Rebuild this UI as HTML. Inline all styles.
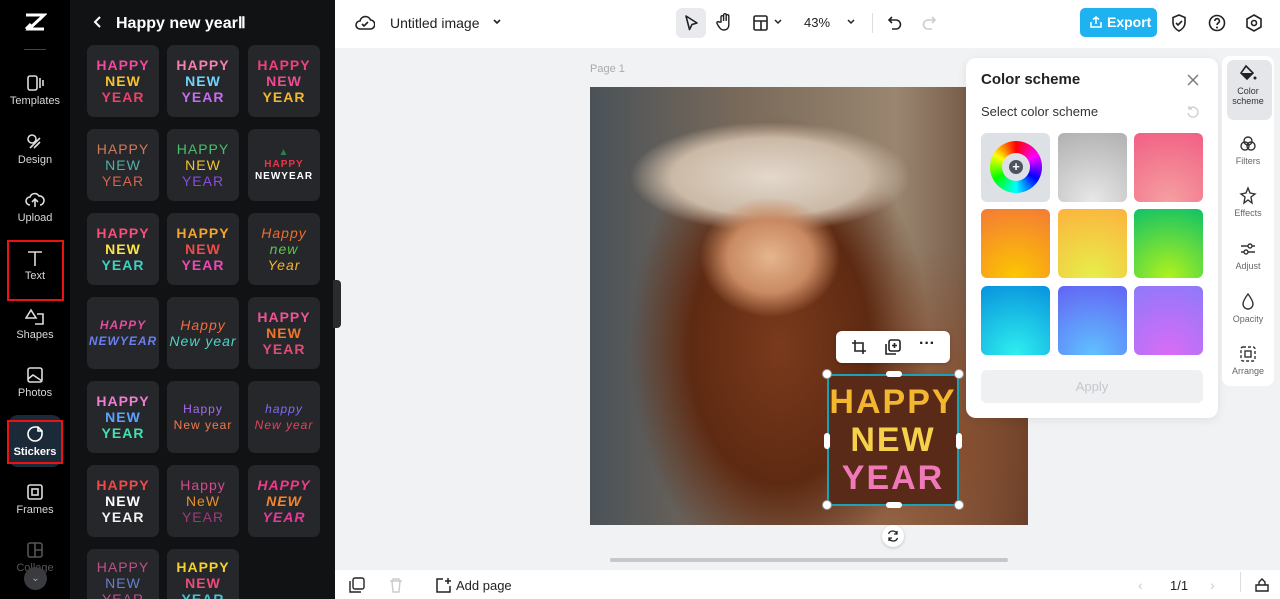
<!DOCTYPE html>
<html style="width:1280px;height:599px;overflow:hidden"><head><meta charset="utf-8"><style>
*{box-sizing:border-box;margin:0;padding:0}
body{width:1280px;height:599px;overflow:hidden;font-family:"Liberation Sans",sans-serif;background:#f1f2f4;position:relative}
.nav{position:absolute;left:0;top:0;width:70px;height:599px;background:#000;overflow:hidden}
.nav .it{position:absolute;left:0;width:70px;text-align:center;color:#d8d8d8;font-size:11px}
.nav svg{display:block;margin:0 auto 3px}
.panel{position:absolute;left:70px;top:0;width:265px;height:599px;background:#111214;overflow:hidden}
.panel h1{position:absolute;left:94px;top:13px;color:#fff;font-size:16px;font-weight:bold}
.tile{position:absolute;width:72px;height:72px;border-radius:7px;background:#26272b;display:flex;flex-direction:column;align-items:center;justify-content:center;font-weight:bold;font-size:14px;line-height:16px;letter-spacing:1px;overflow:hidden}
.top{position:absolute;left:335px;top:0;width:945px;height:48px;background:#fff}
.ic{position:absolute}
.sw{position:absolute;width:69px;height:69px;border-radius:6px}
.side{position:absolute;left:1222px;top:56px;width:52px;height:330px;background:#fff;border-radius:8px}
.side .s{position:absolute;left:0;width:52px;text-align:center;font-size:9px;color:#666}
</style></head><body>

<div class="nav">
 <svg class="ic" style="left:23px;top:11px" width="24" height="22" viewBox="0 0 24 22"><path d="M3 4h18L6 18h15M3 18l5-5M21 4l-5 5" stroke="#fff" stroke-width="3" fill="none"/></svg>
 <div style="position:absolute;left:24px;top:49px;width:22px;height:1px;background:#444"></div>
 <div class="it" style="top:74px"><svg width="20" height="18" viewBox="0 0 20 18"><rect x="3" y="2" width="9" height="14" rx="2" stroke="#ddd" stroke-width="1.6" fill="none"/><path d="M15 4v10M18 6v6" stroke="#ddd" stroke-width="1.6"/></svg>Templates</div>
 <div class="it" style="top:133px"><svg width="20" height="18" viewBox="0 0 20 18"><circle cx="7" cy="6" r="4" stroke="#ddd" stroke-width="1.6" fill="none"/><path d="M5 15l10-10M9 15l6-6" stroke="#ddd" stroke-width="1.6"/></svg>Design</div>
 <div class="it" style="top:191px"><svg width="20" height="18" viewBox="0 0 20 18"><path d="M5 14a4 4 0 010-8 5 5 0 019-1 4 4 0 011 9M10 16V8M7 11l3-3 3 3" stroke="#ddd" stroke-width="1.6" fill="none"/></svg>Upload</div>
 <div class="it" style="top:249px;font-size:11px"><svg width="20" height="18" viewBox="0 0 20 18"><path d="M3 3h14M10 3v14" stroke="#ddd" stroke-width="1.6"/></svg>Text</div>
 <div style="position:absolute;left:7px;top:240px;width:57px;height:61px;border:2px solid #e11"></div>
 <div class="it" style="top:308px"><svg width="20" height="18" viewBox="0 0 20 18"><path d="M6 2l5 8H1zM12 6h6v10h-8" stroke="#ddd" stroke-width="1.6" fill="none"/></svg>Shapes</div>
 <div class="it" style="top:366px"><svg width="20" height="18" viewBox="0 0 20 18"><rect x="3" y="2" width="14" height="14" rx="2" stroke="#ddd" stroke-width="1.6" fill="none"/><path d="M3 13l5-4 9 6" stroke="#ddd" stroke-width="1.6" fill="none"/></svg>Photos</div>
 <div style="position:absolute;left:8px;top:415px;width:54px;height:52px;border-radius:10px;background:#1b2a38"></div>
 <div class="it" style="top:425px;color:#fff;font-weight:bold"><svg width="20" height="18" viewBox="0 0 20 18"><path d="M17 9a7 7 0 11-7-7h3l4 4z M13 2v4h4" stroke="#fff" stroke-width="1.6" fill="none"/></svg>Stickers</div>
 <div style="position:absolute;left:7px;top:420px;width:56px;height:44px;border:2px solid #e11"></div>
 <div class="it" style="top:483px"><svg width="20" height="18" viewBox="0 0 20 18"><rect x="3" y="2" width="14" height="14" rx="2" stroke="#ddd" stroke-width="1.6" fill="none"/><rect x="7" y="6" width="6" height="6" stroke="#ddd" stroke-width="1.6" fill="none"/></svg>Frames</div>
 <div class="it" style="top:541px;color:#555"><svg width="20" height="18" viewBox="0 0 20 18"><rect x="3" y="2" width="14" height="14" rx="2" stroke="#555" stroke-width="1.6" fill="none"/><path d="M10 2v14M10 9h7" stroke="#555" stroke-width="1.6"/></svg>Collage</div>
 <div style="position:absolute;left:24px;top:567px;width:23px;height:23px;border-radius:50%;background:#3a3b3f;color:#aaa;font-size:10px;text-align:center;line-height:23px">⌄</div>
</div>

<div class="panel">
 <svg class="ic" style="left:22px;top:15px" width="10" height="14" viewBox="0 0 10 14"><path d="M8 2L3 7l5 5" stroke="#fff" stroke-width="2" fill="none"/></svg>
 <h1 style="left:46px">Happy new yearⅡ</h1>
 <div class="tile" style="left:17px;top:45px"><span style="color:#f5489a">HAPPY</span><span style="color:#f6c22c">NEW</span><span style="color:#e8436b">YEAR</span></div>
 <div class="tile" style="left:97px;top:45px"><span style="color:#f77fb0">HAPPY</span><span style="color:#6fd4ff">NEW</span><span style="color:#c46cf0">YEAR</span></div>
 <div class="tile" style="left:178px;top:45px"><span style="color:#f33f7a">HAPPY</span><span style="color:#ef4b91">NEW</span><span style="color:#f3b72e">YEAR</span></div>
 <div class="tile" style="left:17px;top:129px;font-weight:normal"><span style="color:#d27a5a">HAPPY</span><span style="color:#4fb1a8">NEW</span><span style="color:#d6644e">YEAR</span></div>
 <div class="tile" style="left:97px;top:129px;font-weight:normal"><span style="color:#49c16a">HAPPY</span><span style="color:#f2c52b">NEW</span><span style="color:#8a4be0">YEAR</span></div>
 <div class="tile" style="left:178px;top:129px;font-size:10px;line-height:12px"><span style="color:#2d7f4d">▲</span><span style="color:#e34">HAPPY</span><span style="color:#fff">NEWYEAR</span></div>
 <div class="tile" style="left:17px;top:213px"><span style="color:#f74d7b">HAPPY</span><span style="color:#fbe44a">NEW</span><span style="color:#3ed1c0">YEAR</span></div>
 <div class="tile" style="left:97px;top:213px"><span style="color:#f5a32a">HAPPY</span><span style="color:#f14d48">NEW</span><span style="color:#ec4ab1">YEAR</span></div>
 <div class="tile" style="left:178px;top:213px;font-weight:normal;font-style:italic"><span style="color:#f06b2a">Happy</span><span style="color:#60c24e">new</span><span style="color:#f3b52a">Year</span></div>
 <div class="tile" style="left:17px;top:297px;font-style:italic;font-size:12px"><span style="color:#e04ca0">HAPPY</span><span style="color:#6a7ff0">NEWYEAR</span></div>
 <div class="tile" style="left:97px;top:297px;font-style:italic;font-weight:normal"><span style="color:#f36a3c">Happy</span><span style="color:#4bd6c6">New year</span></div>
 <div class="tile" style="left:178px;top:297px"><span style="color:#f25294">HAPPY</span><span style="color:#f0762c">NEW</span><span style="color:#e24b74">YEAR</span></div>
 <div class="tile" style="left:17px;top:381px"><span style="color:#f07ed0">HAPPY</span><span style="color:#5ba3ff">NEW</span><span style="color:#42e0b0">YEAR</span></div>
 <div class="tile" style="left:97px;top:381px;font-weight:normal;font-size:12px"><span style="color:#a66bf0">Happy</span><span style="color:#f27a4a">New year</span></div>
 <div class="tile" style="left:178px;top:381px;font-weight:normal;font-style:italic;font-size:12px"><span style="color:#7d6bf5">happy</span><span style="color:#e0445a">New year</span></div>
 <div class="tile" style="left:17px;top:465px"><span style="color:#ee4a4a">HAPPY</span><span style="color:#fff">NEW</span><span style="color:#f2f2f2">YEAR</span></div>
 <div class="tile" style="left:97px;top:465px;font-weight:normal"><span style="color:#d8488c">Happy</span><span style="color:#e8902a">NeW</span><span style="color:#9a3c7c">YEAR</span></div>
 <div class="tile" style="left:178px;top:465px;font-style:italic"><span style="color:#f03a8a">HAPPY</span><span style="color:#f4852c">NEW</span><span style="color:#e53a9a">YEAR</span></div>
 <div class="tile" style="left:17px;top:549px;font-weight:normal;justify-content:flex-start;padding-top:10px"><span style="color:#c0508a">HAPPY</span><span style="color:#6a7ed0">NEW</span><span style="color:#c0508a">YEAR</span></div>
 <div class="tile" style="left:97px;top:549px;justify-content:flex-start;padding-top:10px"><span style="color:#f5d12a">HAPPY</span><span style="color:#ef4a7a">NEW</span><span style="color:#4ac0d0">YEAR</span></div>
</div>
<div style="position:absolute;left:333px;top:280px;width:8px;height:48px;background:#2a2b2e;border-radius:0 4px 4px 0"></div>

<div class="top">
 <svg class="ic" style="left:20px;top:14px" width="20" height="18" viewBox="0 0 20 18"><path d="M5 15a4 4 0 010-8 5.5 5.5 0 0110.5-1A4.5 4.5 0 0115 15z M7 10l2 2 4-4" stroke="#222" stroke-width="1.6" fill="none"/></svg>
 <div style="position:absolute;left:55px;top:15px;font-size:14px;color:#222">Untitled image</div>
 <svg class="ic" style="left:157px;top:17px" width="10" height="10" viewBox="0 0 10 10"><path d="M2 3l3 3 3-3" stroke="#222" stroke-width="1.6" fill="none"/></svg>
 <div style="position:absolute;left:341px;top:8px;width:30px;height:30px;border-radius:6px;background:#e8eaee"></div>
 <svg class="ic" style="left:347px;top:13px" width="18" height="20" viewBox="0 0 18 20"><path d="M4 3l11 7-5 1.5-2.5 5z" stroke="#222" stroke-width="1.6" fill="none" stroke-linejoin="round"/></svg>
 <svg class="ic" style="left:381px;top:12px" width="18" height="20" viewBox="0 0 18 20"><path d="M5 10V5a1.3 1.3 0 012.6 0V9V3a1.3 1.3 0 012.6 0v6V4a1.3 1.3 0 012.6 0v9c0 3-2 5-5 5s-4-2-6-5l-1-2a1.3 1.3 0 012.2-1z" stroke="#222" stroke-width="1.4" fill="none"/></svg>
 <svg class="ic" style="left:417px;top:14px" width="18" height="18" viewBox="0 0 18 18"><rect x="2" y="2" width="13" height="14" rx="1.5" stroke="#222" stroke-width="1.6" fill="none"/><path d="M2 7h13M9 7v9" stroke="#222" stroke-width="1.6"/></svg>
 <svg class="ic" style="left:438px;top:17px" width="10" height="10" viewBox="0 0 10 10"><path d="M2 3l3 3 3-3" stroke="#222" stroke-width="1.5" fill="none"/></svg>
 <div style="position:absolute;left:469px;top:15px;font-size:13px;color:#222">43%</div>
 <svg class="ic" style="left:511px;top:17px" width="10" height="10" viewBox="0 0 10 10"><path d="M2 3l3 3 3-3" stroke="#222" stroke-width="1.5" fill="none"/></svg>
 <div style="position:absolute;left:537px;top:13px;width:1px;height:20px;background:#ddd"></div>
 <svg class="ic" style="left:551px;top:14px" width="18" height="18" viewBox="0 0 18 18"><path d="M6 3L3 6l3 3M3 6h7a4 4 0 010 9H6" stroke="#222" stroke-width="1.6" fill="none"/></svg>
 <svg class="ic" style="left:585px;top:14px" width="18" height="18" viewBox="0 0 18 18"><path d="M12 3l3 3-3 3M15 6H8a4 4 0 000 9h4" stroke="#ccc" stroke-width="1.6" fill="none"/></svg>
 <div style="position:absolute;left:745px;top:8px;width:77px;height:29px;border-radius:5px;background:#1eb2f0;color:#fff;font-weight:bold;font-size:14px;line-height:29px;padding-left:27px;white-space:nowrap">Export</div>
 <svg class="ic" style="left:754px;top:15px" width="14" height="14" viewBox="0 0 14 14"><path d="M2 7v5h10V7M7 9V2M4 4.5L7 2l3 2.5" stroke="#fff" stroke-width="1.5" fill="none"/></svg>
 <svg class="ic" style="left:835px;top:13px" width="18" height="20" viewBox="0 0 18 20"><path d="M9 2l6 2.5v5c0 4-3 7-6 8.5-3-1.5-6-4.5-6-8.5v-5z M6 10l2 2 4-4" stroke="#222" stroke-width="1.6" fill="none"/></svg>
 <svg class="ic" style="left:873px;top:13px" width="18" height="20" viewBox="0 0 18 20"><circle cx="9" cy="10" r="7.5" stroke="#222" stroke-width="1.6" fill="none"/><path d="M6.8 8a2.3 2.3 0 114 1.5c-1 .8-1.8 1.2-1.8 2.5" stroke="#222" stroke-width="1.6" fill="none"/><circle cx="9" cy="14.5" r="1" fill="#222"/></svg>
 <svg class="ic" style="left:910px;top:13px" width="18" height="20" viewBox="0 0 18 20"><path d="M9 2l7 4v8l-7 4-7-4V6z" stroke="#222" stroke-width="1.6" fill="none"/><circle cx="9" cy="10" r="2.5" stroke="#222" stroke-width="1.6" fill="none"/></svg>
</div>

<div style="position:absolute;left:590px;top:63px;font-size:11px;color:#aaa">Page 1</div>
<div style="position:absolute;left:590px;top:87px;width:438px;height:438px;background:
 radial-gradient(ellipse 70px 60px at 180px 170px,#e5b58e 0%,#c98a62 60%,transparent 100%),
 radial-gradient(ellipse 140px 55px at 180px 90px,#e3d8cc 0%,#cbb9a6 70%,transparent 100%),
 radial-gradient(ellipse 150px 230px at 190px 260px,#7a3a1c 0%,#5e2a12 60%,transparent 100%),
 radial-gradient(ellipse 200px 200px at 330px 360px,#8a4a28 0%,transparent 100%),
 linear-gradient(90deg,#4a5258 0%,#7a6a5a 35%,#9a8670 70%,#5a3a2a 100%)"></div>

<div style="position:absolute;left:827px;top:374px;width:132px;height:132px;border:2px solid #1aa3b8;background:#5a2a18;display:flex;flex-direction:column;align-items:center;justify-content:center;font-weight:bold;font-size:34px;line-height:38px;letter-spacing:2px">
 <span style="color:#f2b72e">HAPPY</span><span style="color:#f6d24a">NEW</span><span style="color:#f07ab8">YEAR</span></div>
<div style="position:absolute;left:822px;top:369px;width:10px;height:10px;border-radius:50%;background:#fff;border:1px solid #999"></div>
<div style="position:absolute;left:954px;top:369px;width:10px;height:10px;border-radius:50%;background:#fff;border:1px solid #999"></div>
<div style="position:absolute;left:822px;top:500px;width:10px;height:10px;border-radius:50%;background:#fff;border:1px solid #999"></div>
<div style="position:absolute;left:954px;top:500px;width:10px;height:10px;border-radius:50%;background:#fff;border:1px solid #999"></div>
<div style="position:absolute;left:886px;top:371px;width:16px;height:6px;border-radius:3px;background:#fff"></div>
<div style="position:absolute;left:886px;top:502px;width:16px;height:6px;border-radius:3px;background:#fff"></div>
<div style="position:absolute;left:824px;top:433px;width:6px;height:16px;border-radius:3px;background:#fff"></div>
<div style="position:absolute;left:956px;top:433px;width:6px;height:16px;border-radius:3px;background:#fff"></div>
<div style="position:absolute;left:836px;top:331px;width:114px;height:32px;border-radius:6px;background:#fff;box-shadow:0 1px 4px rgba(0,0,0,.2)"></div>
<svg class="ic" style="left:850px;top:338px" width="18" height="18" viewBox="0 0 18 18"><path d="M5 2v11h11M2 5h11v11" stroke="#222" stroke-width="1.6" fill="none"/></svg>
<svg class="ic" style="left:884px;top:338px" width="18" height="18" viewBox="0 0 18 18"><rect x="5" y="2" width="11" height="11" rx="2" stroke="#222" stroke-width="1.6" fill="none"/><path d="M2 6v10h10M10.5 5v5M8 7.5h5" stroke="#222" stroke-width="1.6" fill="none"/></svg>
<div style="position:absolute;left:919px;top:335px;font-size:16px;font-weight:bold;color:#222">···</div>
<div style="position:absolute;left:882px;top:525px;width:22px;height:22px;border-radius:50%;background:#fff;box-shadow:0 1px 3px rgba(0,0,0,.2)"></div>
<svg class="ic" style="left:886px;top:529px" width="14" height="14" viewBox="0 0 14 14"><path d="M11 5a4.5 4.5 0 00-8.5 0M3 9a4.5 4.5 0 008.5 0M11 2v3H8M3 12V9h3" stroke="#222" stroke-width="1.3" fill="none"/></svg>
<div style="position:absolute;left:610px;top:558px;width:398px;height:4px;border-radius:2px;background:#c5c7cb"></div>

<div style="position:absolute;left:966px;top:58px;width:252px;height:360px;background:#fff;border-radius:10px;box-shadow:0 2px 10px rgba(0,0,0,.08)"></div>
<div style="position:absolute;left:981px;top:71px;font-size:15px;font-weight:bold;color:#222">Color scheme</div>
<svg class="ic" style="left:1186px;top:73px" width="14" height="14" viewBox="0 0 14 14"><path d="M2 2l10 10M12 2L2 12" stroke="#777" stroke-width="1.4"/></svg>
<div style="position:absolute;left:981px;top:104px;font-size:13px;color:#333">Select color scheme</div>
<svg class="ic" style="left:1186px;top:105px" width="14" height="14" viewBox="0 0 14 14"><path d="M3 4a5 5 0 11-1 4M3 1v3h3" stroke="#ccc" stroke-width="1.3" fill="none"/></svg>
<div class="sw" style="left:981px;top:133px;background:#dde0e4"></div>
<div style="position:absolute;left:990px;top:141px;width:52px;height:52px;border-radius:50%;background:conic-gradient(red,#f0f,#00f,#0ff,#0f0,#ff0,red)"></div>
<div style="position:absolute;left:1002px;top:153px;width:28px;height:28px;border-radius:50%;background:#dde0e4"></div>
<div style="position:absolute;left:1009px;top:160px;width:14px;height:14px;border-radius:50%;background:#4b5460;color:#fff;font-size:13px;line-height:14px;text-align:center;font-weight:bold">+</div>
<div class="sw" style="left:1058px;top:133px;background:radial-gradient(circle at 50% 100%,#e8e8e8,#b0b0b0)"></div>
<div class="sw" style="left:1134px;top:133px;background:radial-gradient(circle at 50% 100%,#f5a0a0,#f15f84)"></div>
<div class="sw" style="left:981px;top:209px;background:radial-gradient(circle at 50% 100%,#fcc800,#f47a35)"></div>
<div class="sw" style="left:1058px;top:209px;background:radial-gradient(circle at 50% 100%,#e6f04a,#fdb23e)"></div>
<div class="sw" style="left:1134px;top:209px;background:radial-gradient(circle at 50% 100%,#b2f21c,#0fc266)"></div>
<div class="sw" style="left:981px;top:286px;background:radial-gradient(circle at 50% 100%,#2ef0ee,#0892de)"></div>
<div class="sw" style="left:1058px;top:286px;background:radial-gradient(circle at 50% 100%,#5fc2ff,#6363f4)"></div>
<div class="sw" style="left:1134px;top:286px;background:radial-gradient(circle at 50% 100%,#da6cf6,#8e79fa)"></div>
<div style="position:absolute;left:981px;top:370px;width:222px;height:33px;border-radius:6px;background:#eef0f2;color:#c4c7cc;font-size:13px;text-align:center;line-height:33px">Apply</div>

<div class="side"></div>
<div style="position:absolute;left:1227px;top:60px;width:45px;height:60px;border-radius:7px;background:#e4e6ea"></div>
<div class="side" style="background:none">
 <div class="s" style="top:8px;color:#333"><svg width="20" height="20" viewBox="0 0 20 20"><path d="M8 2l7 7-6 6-6-6z" stroke="#222" stroke-width="1.6" fill="none"/><path d="M4 9h11l-6 6z" fill="#222"/><circle cx="17" cy="14" r="1.5" fill="#222"/></svg><br>Color<br>scheme</div>
 <div class="s" style="top:78px"><svg width="20" height="20" viewBox="0 0 20 20"><circle cx="10" cy="7" r="4" stroke="#333" stroke-width="1.4" fill="none"/><circle cx="7" cy="12" r="4" stroke="#333" stroke-width="1.4" fill="none"/><circle cx="13" cy="12" r="4" stroke="#333" stroke-width="1.4" fill="none"/></svg><br>Filters</div>
 <div class="s" style="top:130px"><svg width="20" height="20" viewBox="0 0 20 20"><path d="M10 2l2 5 5 1-4 3 1 6-4-3-4 3 1-6-4-3 5-1z" stroke="#333" stroke-width="1.4" fill="none"/></svg><br>Effects</div>
 <div class="s" style="top:183px"><svg width="20" height="20" viewBox="0 0 20 20"><path d="M3 7h14M3 13h14" stroke="#333" stroke-width="1.4"/><circle cx="12" cy="7" r="2" fill="#fff" stroke="#333" stroke-width="1.4"/><circle cx="8" cy="13" r="2" fill="#fff" stroke="#333" stroke-width="1.4"/></svg><br>Adjust</div>
 <div class="s" style="top:236px"><svg width="20" height="20" viewBox="0 0 20 20"><path d="M10 2c3 4 5 7 5 10a5 5 0 01-10 0c0-3 2-6 5-10z" stroke="#333" stroke-width="1.4" fill="none"/></svg><br>Opacity</div>
 <div class="s" style="top:288px"><svg width="20" height="20" viewBox="0 0 20 20"><rect x="3" y="3" width="14" height="14" rx="2" stroke="#333" stroke-width="1.4" fill="none" stroke-dasharray="3 2"/><rect x="7" y="7" width="6" height="6" stroke="#333" stroke-width="1.4" fill="none"/></svg><br>Arrange</div>
</div>

<div style="position:absolute;left:335px;top:570px;width:945px;height:29px;background:#fff"></div>
<svg class="ic" style="left:349px;top:577px" width="16" height="16" viewBox="0 0 16 16"><rect x="4" y="1" width="11" height="11" rx="2" stroke="#222" stroke-width="1.4" fill="none"/><path d="M1 4v11h11" stroke="#222" stroke-width="1.4" fill="none"/></svg>
<svg class="ic" style="left:388px;top:577px" width="16" height="16" viewBox="0 0 16 16"><path d="M2 4h12M5 4V2h6v2M4 4l1 11h6l1-11" stroke="#ccc" stroke-width="1.4" fill="none"/></svg>
<svg class="ic" style="left:434px;top:577px" width="18" height="18" viewBox="0 0 18 18"><path d="M9 2H3v13h13V9M14 1v6M11 4h6" stroke="#222" stroke-width="1.5" fill="none"/></svg>
<div style="position:absolute;left:456px;top:578px;font-size:13px;color:#222">Add page</div>
<div style="position:absolute;left:1138px;top:577px;color:#ccc;font-size:14px">‹</div>
<div style="position:absolute;left:1170px;top:578px;font-size:13px;color:#222">1/1</div>
<div style="position:absolute;left:1210px;top:577px;color:#ccc;font-size:14px">›</div>
<div style="position:absolute;left:1240px;top:572px;width:1px;height:20px;background:#ddd"></div>
<svg class="ic" style="left:1254px;top:577px" width="16" height="16" viewBox="0 0 16 16"><path d="M2 8h12v6H2zM5 8V5l3-3 3 3v3" stroke="#222" stroke-width="1.4" fill="none"/></svg>
</body></html>
